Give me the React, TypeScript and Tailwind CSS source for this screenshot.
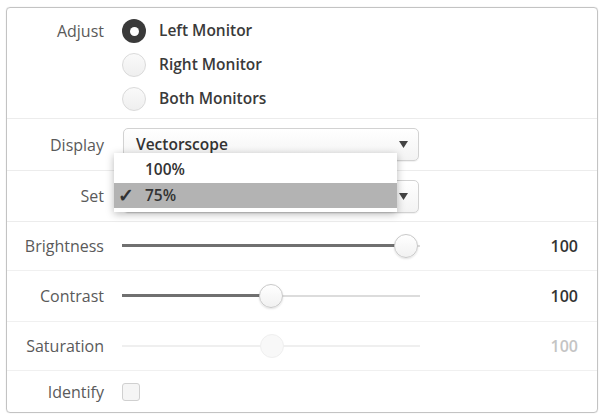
import React from "react";

const font = { fontFamily: '"Open Sans", "Liberation Sans", sans-serif' };

const Label: React.FC<{ text: string }> = ({ text }) => (
  <div className="w-[97px] shrink-0 text-right text-[16px] text-[#5a5a5a]">{text}</div>
);

const Radio: React.FC<{ checked?: boolean; label: string }> = ({ checked, label }) => (
  <div className="flex h-[34px] items-center gap-[13px]">
    {checked ? (
      <div className="flex h-[24px] w-[24px] items-center justify-center rounded-full bg-[#3a3a3a]">
        <div className="h-[9px] w-[9px] rounded-full bg-white" />
      </div>
    ) : (
      <div className="h-[24px] w-[24px] rounded-full border border-[#dadada] bg-gradient-to-b from-[#fafafa] to-[#efefef]" />
    )}
    <span className="text-[15.5px] font-semibold text-[#3a3a3a]">{label}</span>
  </div>
);

const Caret = () => (
  <svg width="9" height="7" viewBox="0 0 9 7">
    <path d="M0 0h9L4.5 7z" fill="#444" />
  </svg>
);

const Select: React.FC<{ value?: string }> = ({ value }) => (
  <div className="flex h-[33px] w-[296px] items-center justify-between rounded-[5px] border border-[#d2d2d2] bg-gradient-to-b from-white to-[#f3f3f3] pl-[12px] pr-[10px] shadow-[0_1px_1px_rgba(0,0,0,0.06)]">
    <span className="text-[15.5px] font-semibold text-[#333]">{value}</span>
    <Caret />
  </div>
);

const Slider: React.FC<{ pos: number; disabled?: boolean }> = ({ pos, disabled }) => (
  <div className="relative h-[26px] w-[298px]">
    <div className={`absolute left-0 right-0 top-[12px] h-[2px] ${disabled ? "bg-[#efefef]" : "bg-[#dcdcdc]"}`} />
    {!disabled && (
      <div className="absolute left-0 top-[11px] h-[3px] bg-[#707070]" style={{ width: pos }} />
    )}
    <div
      className={
        disabled
          ? "absolute top-[1px] h-[24px] w-[24px] rounded-full border border-[#efefef] bg-[#f8f8f8]"
          : "absolute top-[1px] h-[24px] w-[24px] rounded-full border border-[#c9c9c9] bg-gradient-to-b from-white to-[#f1f1f1] shadow-[0_1px_2px_rgba(0,0,0,0.12)]"
      }
      style={{ left: pos - 12 }}
    />
  </div>
);

const SliderRow: React.FC<{ label: string; pos: number; disabled?: boolean; h: string }> = ({
  label,
  pos,
  disabled,
  h,
}) => (
  <div className={`flex ${h} items-center border-b border-[#f0f0f0]`}>
    <Label text={label} />
    <div className="ml-[18px]">
      <Slider pos={pos} disabled={disabled} />
    </div>
    <div
      className={`ml-auto mr-[19px] text-[16px] font-semibold ${disabled ? "text-[#c4c4c4]" : "text-[#333]"}`}
    >
      100
    </div>
  </div>
);

export default function App() {
  return (
    <div className="h-[418px] w-[601px] bg-white pl-[6px] pr-[3px] pt-[7px]" style={font}>
      <div className="relative h-[406px] rounded-[4px] border border-[#c3c3c3] shadow-[0_0_1px_rgba(0,0,0,0.2)]">
        {/* Adjust */}
        <div className="flex h-[111px] border-b border-[#ececec] pt-[6px]">
          <div className="flex h-[34px] items-center">
            <Label text="Adjust" />
          </div>
          <div className="ml-[18px] flex flex-col">
            <Radio checked label="Left Monitor" />
            <Radio label="Right Monitor" />
            <Radio label="Both Monitors" />
          </div>
        </div>

        {/* Display */}
        <div className="flex h-[52px] items-center border-b border-[#ececec]">
          <Label text="Display" />
          <div className="ml-[19px]">
            <Select value="Vectorscope" />
          </div>
        </div>

        {/* Set */}
        <div className="flex h-[51px] items-center border-b border-[#ececec]">
          <Label text="Set" />
          <div className="ml-[19px]">
            <Select />
          </div>
        </div>

        <SliderRow label="Brightness" pos={284} h="h-[49px]" />
        <SliderRow label="Contrast" pos={149} h="h-[51px]" />
        <SliderRow label="Saturation" pos={150} h="h-[49px]" disabled />

        {/* Identify */}
        <div className="flex h-[42px] items-center">
          <Label text="Identify" />
          <div className="ml-[18px] h-[18px] w-[18px] rounded-[3px] border border-[#d0d0d0] bg-[#f5f5f5]" />
        </div>

        {/* open menu */}
        <div className="absolute left-[107px] top-[145px] w-[283px] bg-white pb-[4px] shadow-[0_2px_8px_rgba(0,0,0,0.28)]">
          <div className="flex h-[30px] items-center pl-[31px] pt-[4px] text-[15.5px] font-semibold text-[#333]">
            100%
          </div>
          <div className="flex h-[25px] items-center bg-[#b3b3b3] text-[15.5px] font-semibold text-[#333]">
            <span className="w-[31px] pl-[4px] text-[19px] font-bold leading-none">✓</span>
            75%
          </div>
        </div>
      </div>
    </div>
  );
}
